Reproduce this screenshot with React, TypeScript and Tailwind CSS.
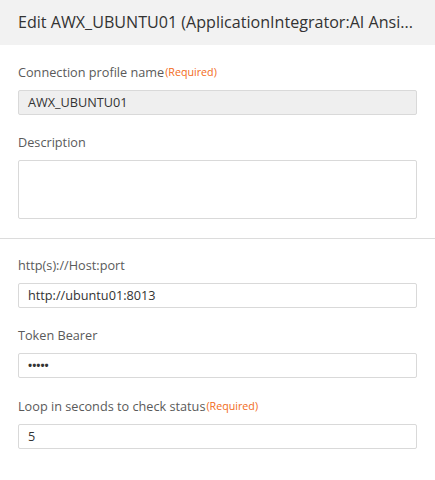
export default function App() {
  return (
    <main className="min-h-screen w-[435px] bg-white text-[#555] font-['Open_Sans',sans-serif]">
      <header className="h-[45px] bg-[#f2f2f2] px-[18px] flex items-center">
        <h1 className="text-[16.1px] text-[#333] whitespace-nowrap overflow-hidden">
          Edit AWX_UBUNTU01 (ApplicationIntegrator:AI Ansi...
        </h1>
      </header>

      <section className="px-[18px] pt-[18px] pb-[19px]">
        <Label text="Connection profile name" required />
        <div className="h-[25px] border border-[#d9d9d9] bg-[#efefef] rounded-[2px] px-[9px] flex items-center text-[12.7px] text-[#333]">
          AWX_UBUNTU01
        </div>

        <div className="mt-[18px]">
          <Label text="Description" />
          <div className="h-[59px] border border-[#d9d9d9] rounded-[2px] bg-white" />
        </div>
      </section>

      <hr className="border-0 h-px bg-[#dcdcdc]" />

      <section className="px-[18px] pt-[17px]">
        <Label text="http(s)://Host:port" />
        <Field value="http://ubuntu01:8013" />

        <div className="mt-[18px]">
          <Label text="Token Bearer" />
          <Field value="•••••" small />
        </div>

        <div className="mt-[19px]">
          <Label text="Loop in seconds to check status" required />
          <Field value="5" />
        </div>
      </section>
    </main>
  )
}

function Label({ text, required }: { text: string; required?: boolean }) {
  return (
    <div className="h-[18px] mb-[9px] flex items-center text-[12.7px] text-[#5a5a5a] leading-[18px]">
      {text}
      {required && <span className="ml-[1px] text-[10.7px] text-[#f26b21]">(Required)</span>}
    </div>
  )
}

function Field({ value, small }: { value: string; small?: boolean }) {
  return (
    <div className="h-[25px] border border-[#d9d9d9] rounded-[2px] bg-white px-[9px] flex items-center text-[12.7px] text-[#333]">
      <span className={small ? 'text-[11px] font-bold' : ''}>{value}</span>
    </div>
  )
}
